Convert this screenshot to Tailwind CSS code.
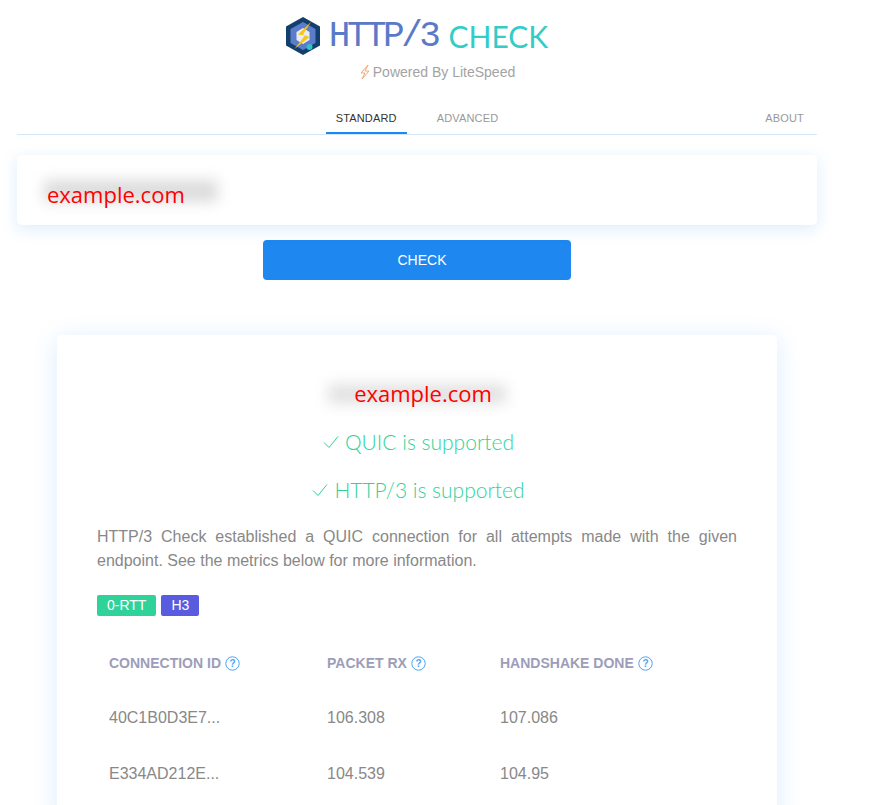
<!DOCTYPE html>
<html><head><meta charset="utf-8"><title>HTTP/3 Check</title>
<script src="https://cdn.jsdelivr.net/npm/@tailwindcss/browser@4"></script></head>
<body class="bg-white overflow-hidden font-['Liberation_Sans',sans-serif] h-[805px]">
<div class="w-[800px] ml-[17px]">
  <header class="flex flex-col items-center pt-[14px] h-[100px]">
    <div class="flex items-center h-[44px] ml-[-1px]">
      <svg width="36" height="38" viewBox="0 0 36 38" class="mr-[8px]">
        <path d="M18 0 L35 9.500 L35 28.500 L18 38 L1 28.500 L1 9.500 Z" fill="#123f6d"/>
        <path d="M18 5 L30.500 12 L30.500 26 L18 33 L5.500 26 L5.500 12 Z" fill="#5b7cc9"/>
        <path d="M18 11 L24.500 15 L24.500 23 L18 27 L11.500 23 L11.500 15 Z" fill="#e8ecf6"/>
        <path d="M26 5 L13 17.500 L20 18.500 L9.500 32 L24.500 20 L18 17.500 Z" fill="#f5c518"/>
        <circle cx="24.500" cy="30" r="3" fill="#2ec4c6"/>
      </svg>
      <span class="font-['Liberation_Mono',monospace] text-[#5a7ac8] text-[36px] tracking-[-3.5px] mt-[1px]">HTTP/3</span>
      <span class="font-['Lato',sans-serif] text-[#33cdc8] text-[30px] ml-[11px]">CHECK</span>
    </div>
    <div class="flex items-center mt-[2px] ml-[40px] h-[24px] text-[14px] text-[#a3a3a3]">
      <svg width="12" height="16" viewBox="0 0 12 16" class="mr-[2px]"><path d="M9 1 L2 9 L6 9 L3 15 L10 7 L6 7 Z" fill="none" stroke="#f5a97a" stroke-width="1"/></svg>
      <span>Powered By LiteSpeed</span>
    </div>
  </header>
  <nav class="relative flex justify-center items-end h-[35px] border-b border-[#d5e8f7] text-[11px] text-[#999] tracking-[0.015em]">
    <div class="flex gap-[20px]">
      <span class="px-[10px] h-[35px] leading-[38px] text-[#333] border-b-2 border-[#1e88f0] -mb-px">STANDARD</span>
      <span class="px-[10px] h-[35px] leading-[38px]">ADVANCED</span>
    </div>
    <span class="absolute right-[13px] top-0 leading-[37px]">ABOUT</span>
  </nav>
  <section class="relative mt-[20px] h-[70px] bg-white rounded-[5px] shadow-[0_4px_16px_rgba(30,136,240,0.16)] overflow-hidden">
    <div class="absolute left-[27px] top-[25px] w-[174px] h-[22px] bg-[#dcdcdc] blur-[7px]"></div>
    <span class="absolute left-[30px] top-[24px] text-[22px] leading-[30px] font-['Open_Sans',sans-serif] text-[#ff0000]">example.com</span>
  </section>
  <div class="flex justify-center mt-[15px]">
    <button class="w-[308px] h-[40px] pl-[10px] bg-[#1e88f0] text-white text-[14px] rounded-[4px]">CHECK</button>
  </div>
  <main class="w-[720px] ml-[40px] mt-[55px] h-[490px] pt-[43px] px-[40px] bg-white rounded-[5px] shadow-[0_4px_24px_rgba(30,136,240,0.16)]">
    <div class="relative h-[30px] flex justify-center pl-[12px]">
      <div class="absolute left-[231px] top-[6px] w-[178px] h-[20px] bg-[#e2e2e2] blur-[7px]"></div>
      <span class="relative text-[22px] leading-[30px] font-['Open_Sans',sans-serif] text-[#ff0000]">example.com</span>
    </div>
    <div class="pt-[19px] text-center font-['Lato',sans-serif] font-light text-[#2fd39a] text-[21px] leading-[30px]">
      <p class="h-[30px] flex items-center justify-center gap-[6px] pl-[3px]"><svg width="16" height="14" viewBox="0 0 16 14"><path d="M1 7.500 L6 12.500 L15 1.500" fill="none" stroke="#36d196" stroke-width="1"/></svg><span>QUIC is supported</span></p>
      <p class="h-[30px] mt-[18px] flex items-center justify-center gap-[6px] pl-[3px]"><svg width="16" height="14" viewBox="0 0 16 14"><path d="M1 7.500 L6 12.500 L15 1.500" fill="none" stroke="#36d196" stroke-width="1"/></svg><span>HTTP/3 is supported</span></p>
    </div>
    <p class="mt-[20px] text-[16px] leading-[24px] text-[#888] text-justify">HTTP/3 Check established a QUIC connection for all attempts made with the given endpoint. See the metrics below for more information.</p>
    <div class="flex gap-[5px] mt-[22px]">
      <span class="h-[21px] px-[10px] leading-[21px] text-[14px] text-white bg-[#2fd39a] rounded-[2px]">0-RTT</span>
      <span class="h-[21px] px-[10px] leading-[21px] text-[14px] text-white bg-[#5a5ce0] rounded-[2px]">H3</span>
    </div>
    <table class="mt-[21px] w-full text-left border-collapse table-fixed">
      <colgroup><col class="w-[218px]"><col class="w-[173px]"><col></colgroup>
      <thead class="text-[14px] font-bold text-[#9d9dba]">
        <tr class="h-[53px]">
          <th class="pl-[12px]"><span class="inline-flex items-center gap-[4px]">CONNECTION ID <svg width="15" height="15" viewBox="0 0 15 15"><circle cx="7.500" cy="7.500" r="6.700" fill="none" stroke="#4da3f5" stroke-width="1"/><text x="7.500" y="11" text-anchor="middle" font-size="10" font-weight="bold" fill="#4da3f5">?</text></svg></span></th>
          <th class="pl-[12px]"><span class="inline-flex items-center gap-[4px]">PACKET RX <svg width="15" height="15" viewBox="0 0 15 15"><circle cx="7.500" cy="7.500" r="6.700" fill="none" stroke="#4da3f5" stroke-width="1"/><text x="7.500" y="11" text-anchor="middle" font-size="10" font-weight="bold" fill="#4da3f5">?</text></svg></span></th>
          <th class="pl-[12px]"><span class="inline-flex items-center gap-[4px]">HANDSHAKE DONE <svg width="15" height="15" viewBox="0 0 15 15"><circle cx="7.500" cy="7.500" r="6.700" fill="none" stroke="#4da3f5" stroke-width="1"/><text x="7.500" y="11" text-anchor="middle" font-size="10" font-weight="bold" fill="#4da3f5">?</text></svg></span></th>
        </tr>
      </thead>
      <tbody class="text-[16px] text-[#888]">
        <tr class="h-[56px]"><td class="pl-[12px]">40C1B0D3E7...</td><td class="pl-[12px]">106.308</td><td class="pl-[12px]">107.086</td></tr>
        <tr class="h-[56px]"><td class="pl-[12px]">E334AD212E...</td><td class="pl-[12px]">104.539</td><td class="pl-[12px]">104.95</td></tr>
      </tbody>
    </table>
  </main>
</div>
</body></html>
